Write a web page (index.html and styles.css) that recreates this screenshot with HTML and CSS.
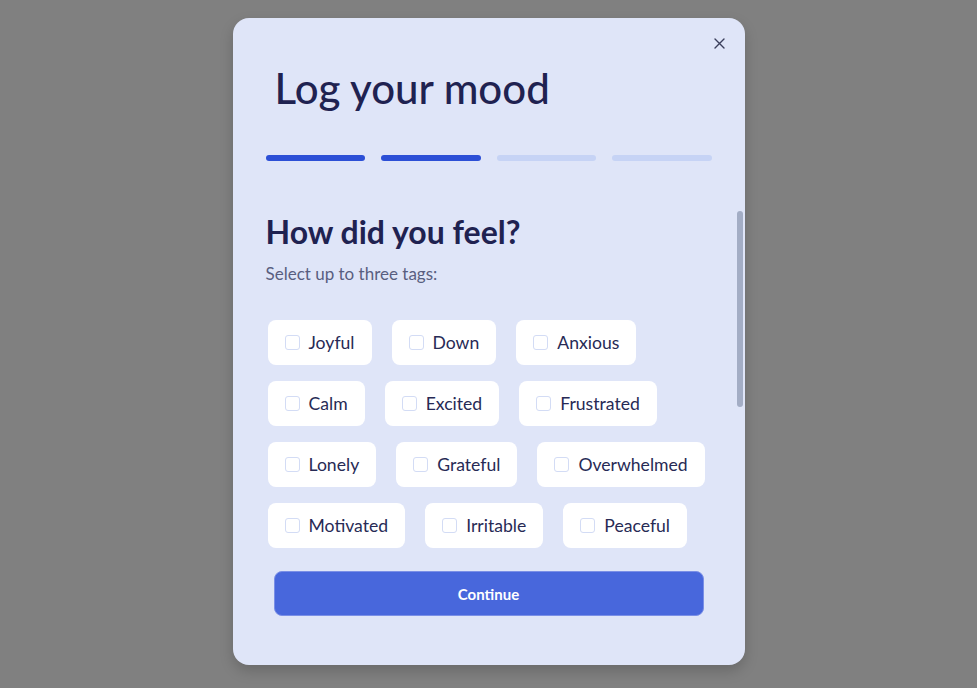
FILE: index.html
```html
<!DOCTYPE html>
<html lang="en">
<head>
<meta charset="utf-8">
<title>Log your mood</title>
<link rel="stylesheet" href="styles.css">
</head>
<body>
<div class="overlay">
  <div class="modal">
    <button class="close" aria-label="Close">
      <svg width="11" height="11" viewBox="0 0 11 11"><path d="M1 1L10 10M10 1L1 10" stroke="#3b3f5c" stroke-width="1.4" stroke-linecap="round"/></svg>
    </button>
    <h1 class="title">Log your mood</h1>
    <div class="progress">
      <span class="bar active"></span>
      <span class="bar active"></span>
      <span class="bar"></span>
      <span class="bar"></span>
    </div>
    <div class="scroll">
      <h2 class="question">How did you feel?</h2>
      <p class="hint">Select up to three tags:</p>
      <div class="tags">
        <label class="tag"><span class="box"></span>Joyful</label>
        <label class="tag"><span class="box"></span>Down</label>
        <label class="tag"><span class="box"></span>Anxious</label>
        <label class="tag"><span class="box"></span>Calm</label>
        <label class="tag"><span class="box"></span>Excited</label>
        <label class="tag"><span class="box"></span>Frustrated</label>
        <label class="tag"><span class="box"></span>Lonely</label>
        <label class="tag"><span class="box"></span>Grateful</label>
        <label class="tag"><span class="box"></span>Overwhelmed</label>
        <label class="tag"><span class="box"></span>Motivated</label>
        <label class="tag"><span class="box"></span>Irritable</label>
        <label class="tag"><span class="box"></span>Peaceful</label>
      </div>
      <span class="thumb"></span>
    </div>
    <button class="continue">Continue</button>
  </div>
</div>
</body>
</html>
```

FILE: styles.css
```css
* { box-sizing: border-box; }
html, body { margin: 0; padding: 0; }
body {
  background: #808080;
  height: 688px;
  overflow: hidden;
  font-family: Lato, "Noto Sans", sans-serif;
  color: #1f2251;
}
.overlay {
  display: flex;
  justify-content: center;
  padding-top: 18px;
}
.modal {
  position: relative;
  width: 512px;
  height: 647px;
  background: #dfe5f8;
  border-radius: 16px;
  box-shadow: 0 6px 14px rgba(0,0,0,0.18);
  padding: 0 33px;
  display: flex;
  flex-direction: column;
}
.close {
  position: absolute;
  top: 17px;
  right: 17px;
  width: 16px;
  height: 16px;
  border: 0;
  background: none;
  padding: 0;
  display: flex;
  align-items: center;
  justify-content: center;
}
.title {
  margin: 46px 0 0 9px;
  font-size: 42px;
  line-height: 48px;
  font-weight: 500;
  color: #1f2251;
}
.progress {
  display: flex;
  gap: 16px;
  margin-top: 43px;
}
.bar {
  flex: 1;
  height: 6px;
  border-radius: 3px;
  background: #c6d3f5;
}
.bar.active { background: #2c4fd6; }
.scroll {
  position: relative;
  height: 387px;
  overflow: hidden;
  margin: 0 -33px;
  padding: 52px 33px 0;
}
.question {
  margin: 0;
  font-size: 32px;
  line-height: 38px;
  font-weight: 700;
  color: #1f2251;
}
.hint {
  margin: 12px 0 0;
  font-size: 17px;
  line-height: 22px;
  color: #595e80;
}
.tags {
  display: flex;
  flex-wrap: wrap;
  gap: 16px 20px;
  margin-top: 35px;
  padding-left: 2px;
}
.tag {
  display: flex;
  align-items: center;
  gap: 9px;
  height: 45px;
  padding: 0 17px;
  background: #fff;
  border-radius: 8px;
  font-size: 17.6px;
  color: #272a55;
}
.box {
  width: 15px;
  height: 15px;
  border: 1.5px solid #d3dcf5;
  border-radius: 3px;
}
.thumb {
  position: absolute;
  right: 2px;
  top: 50px;
  width: 6px;
  height: 196px;
  border-radius: 3px;
  background: #a3adc5;
}
.continue {
  margin: 23px 8px 0;
  height: 45px;
  border-radius: 8px;
  border: 1px solid #7a8fe6;
  background: #4867dc;
  color: #fff;
  font-family: Lato, "Noto Sans", sans-serif;
  font-size: 15px;
  font-weight: 700;
}
```
